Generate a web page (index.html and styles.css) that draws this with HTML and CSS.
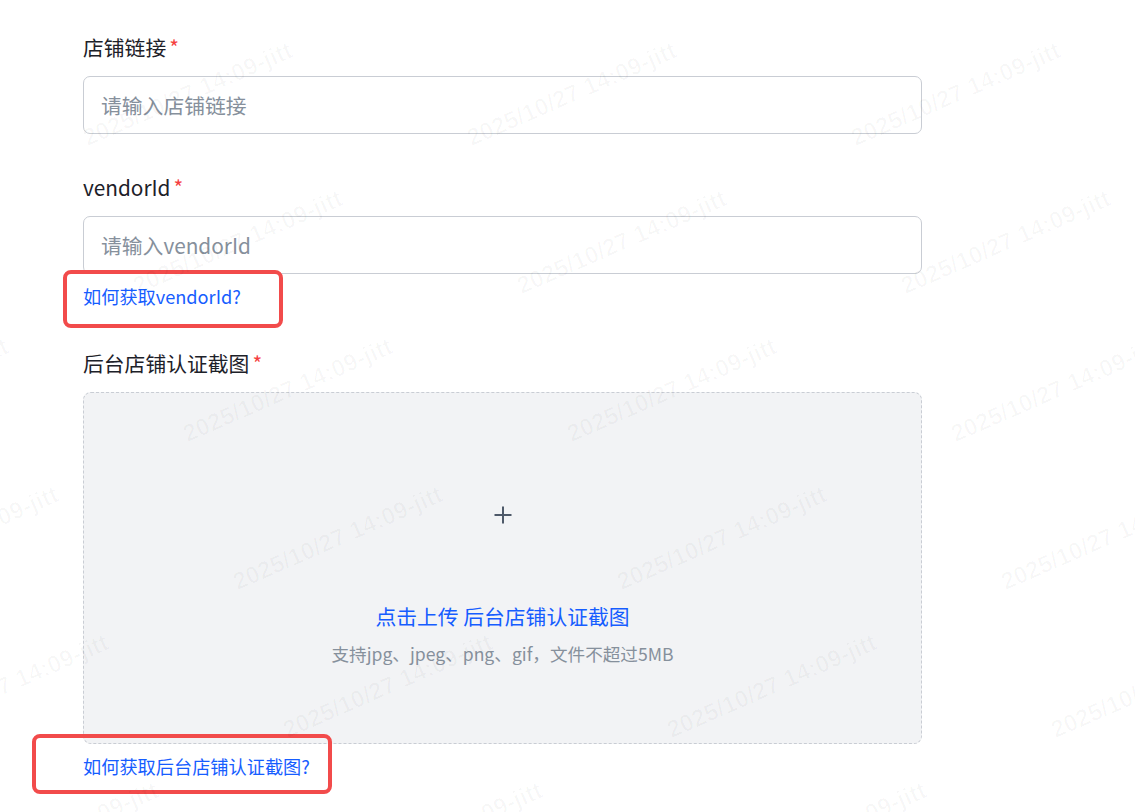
FILE: index.html
```html
<!DOCTYPE html>
<html lang="zh-CN">
<head>
<meta charset="utf-8">
<title>店铺认证</title>
<link rel="stylesheet" href="styles.css">
</head>
<body>
<form class="form">
  <div class="item">
    <label class="label">店铺链接<span class="req">*</span></label>
    <input class="input" type="text" placeholder="请输入店铺链接">
  </div>
  <div class="item item-tip">
    <label class="label">vendorId<span class="req">*</span></label>
    <input class="input" type="text" placeholder="请输入vendorId">
    <div class="tip">
      <a class="link" href="#">如何获取vendorId?</a>
      <span class="mark mark-1"></span>
    </div>
  </div>
  <div class="item">
    <label class="label">后台店铺认证截图<span class="req">*</span></label>
    <div class="upload">
      <svg class="plus" width="18" height="18" viewBox="0 0 18 18"><path d="M9 0.5V17.5M0.5 9H17.5" stroke="#4e5969" stroke-width="2" fill="none"/></svg>
      <div class="upload-title">点击上传 后台店铺认证截图</div>
      <div class="upload-hint">支持jpg、jpeg、png、gif，文件不超过5MB</div>
    </div>
    <div class="tip">
      <a class="link" href="#">如何获取后台店铺认证截图?</a>
      <span class="mark mark-2"></span>
    </div>
  </div>
</form>
<div class="watermarks" aria-hidden="true"></div>
<script src="watermark.js"></script>
</body>
</html>
```

FILE: styles.css
```css
* { box-sizing: border-box; }
html, body { margin: 0; padding: 0; background: #fff; }
body {
  font-family: "Noto Sans CJK SC", "Noto Sans", sans-serif;
  color: #1d2129;
  width: 1135px;
  height: 812px;
  overflow: hidden;
  position: relative;
}
.form {
  width: 922px;
  padding: 33px 0 0 83px;
  display: flex;
  flex-direction: column;
}
.item {
  display: flex;
  flex-direction: column;
  gap: 15px;
  margin-bottom: 39px;
}
.item-tip { margin-bottom: 41px; }
.label {
  font-size: 20.8px;
  line-height: 28px;
  height: 28px;
  color: #1d2129;
}
.req {
  color: #f53f3f;
  margin-left: 3px;
}
.input {
  width: 839px;
  height: 58px;
  border: 1px solid #c9cdd4;
  border-radius: 7px;
  padding: 0 17px;
  font-family: inherit;
  font-size: 20.8px;
  color: #1d2129;
  background: #fff;
  outline: none;
}
.input::placeholder { color: #86909c; }
.tip {
  position: relative;
  margin-top: -5px;
  line-height: 24px;
  height: 24px;
}
.link {
  font-size: 18.2px;
  color: #165dff;
  text-decoration: none;
}
.mark {
  position: absolute;
  border: 4px solid #f24b4b;
  border-radius: 8px;
  pointer-events: none;
}
.mark-1 { left: -20px; top: -14px; width: 220px; height: 58px; }
.mark-2 { left: -51px; top: -20px; width: 300px; height: 60px; }
.upload {
  width: 839px;
  height: 352px;
  border: 1px dashed #c9cdd4;
  border-radius: 8px;
  background: #f2f3f5;
  display: flex;
  flex-direction: column;
  align-items: center;
  padding-top: 113px;
}
.plus { display: block; }
.upload-title {
  margin-top: 78px;
  font-size: 20.8px;
  line-height: 28px;
  color: #165dff;
}
.upload-hint {
  margin-top: 13px;
  font-size: 17.6px;
  line-height: 22px;
  color: #86909c;
}
.watermarks {
  position: absolute;
  left: 0;
  top: 0;
  width: 1135px;
  height: 812px;
  overflow: hidden;
  pointer-events: none;
}
.wm {
  position: absolute;
  white-space: nowrap;
  font-family: "Liberation Sans", Arial, sans-serif;
  font-weight: bold;
  font-size: 24px;
  line-height: 24px;
  color: rgba(0, 0, 0, 0.028);
  transform-origin: 0 100%;
  transform: rotate(-23.5deg);
}
```

FILE: watermark.js
```js
(function () {
  var layer = document.querySelector('.watermarks');
  for (var c = -2; c <= 3; c++) {
    for (var r = -2; r <= 6; r++) {
      var x = 89 + 384 * c + 50 * r;
      var y = 150 + 148 * r;
      if (x < -260 || x > 1135 || y < -40 || y > 900) continue;
      var s = document.createElement('span');
      s.className = 'wm';
      s.textContent = '2025/10/27 14:09-jitt';
      s.style.left = x + 'px';
      s.style.top = (y - 24) + 'px';
      layer.appendChild(s);
    }
  }
})();
```
